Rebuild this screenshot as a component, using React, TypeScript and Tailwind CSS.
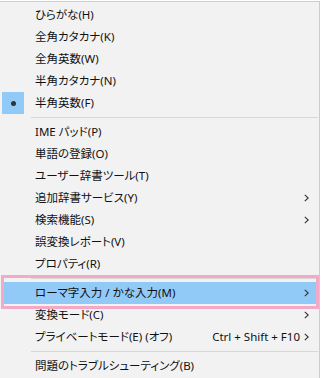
import React from 'react';

type Row =
  | { kind: 'sep' }
  | {
      kind: 'item';
      label: string;
      checked?: boolean;
      submenu?: boolean;
      shortcut?: string;
      active?: boolean;
    };

const rows: Row[] = [
  { kind: 'item', label: 'ひらがな(H)' },
  { kind: 'item', label: '全角カタカナ(K)' },
  { kind: 'item', label: '全角英数(W)' },
  { kind: 'item', label: '半角カタカナ(N)' },
  { kind: 'item', label: '半角英数(F)', checked: true },
  { kind: 'sep' },
  { kind: 'item', label: 'IME パッド(P)' },
  { kind: 'item', label: '単語の登録(O)' },
  { kind: 'item', label: 'ユーザー辞書ツール(T)' },
  { kind: 'item', label: '追加辞書サービス(Y)', submenu: true },
  { kind: 'item', label: '検索機能(S)', submenu: true },
  { kind: 'item', label: '誤変換レポート(V)' },
  { kind: 'item', label: 'プロパティ(R)' },
  { kind: 'sep' },
  { kind: 'item', label: 'ローマ字入力 / かな入力(M)', submenu: true, active: true },
  { kind: 'item', label: '変換モード(C)', submenu: true },
  { kind: 'item', label: 'プライベートモード(E) (オフ)', submenu: true, shortcut: 'Ctrl + Shift + F10' },
  { kind: 'sep' },
  { kind: 'item', label: '問題のトラブルシューティング(B)' },
];

function Chevron() {
  return (
    <svg width="5" height="8" viewBox="0 0 5 8" className="shrink-0">
      <path d="M0.8 0.8 L4.2 4 L0.8 7.2" fill="none" stroke="#333" strokeWidth="1.1" />
    </svg>
  );
}

export default function App() {
  return (
    <div className="relative w-[321px] h-[378px] overflow-hidden bg-white font-['Noto_Sans','Noto_Sans_CJK_JP',sans-serif] [font-feature-settings:'palt'] text-[11.5px] text-[#111]">
      {/* menu */}
      <div className="mt-px w-[320px] bg-[#f2f2f2] border-t border-r border-[#cccccc] pt-[2px] pb-4">
        {rows.map((row, i) =>
          row.kind === 'sep' ? (
            <div key={i} className="h-[7px] flex items-center pl-[31px] pr-[1px]">
              <div className="h-px w-full bg-[#d7d7d7]" />
            </div>
          ) : (
            <div
              key={i}
              className={`h-[22px] flex items-center ml-[2px] mr-[2px] ${row.active ? 'bg-[#91c9f7]' : ''}`}
            >
              <div
                className={`w-[22px] h-[22px] flex items-center justify-center shrink-0 ${
                  row.checked ? 'bg-[#91c9f7]' : ''
                }`}
              >
                {row.checked && <div className="w-[5px] h-[5px] rounded-full bg-[#333]" />}
              </div>
              <span className="ml-[11px] whitespace-nowrap leading-none">{row.label}</span>
              <div className="flex-1" />
              {row.shortcut && (
                <span className="mr-[4px] whitespace-nowrap leading-none">{row.shortcut}</span>
              )}
              {row.submenu && <Chevron />}
              <div className="w-[8px]" />
            </div>
          )
        )}
      </div>

      {/* annotation box */}
      <div className="absolute left-[1px] top-[275px] w-[318px] h-[34px] border-[3px] border-[#f5a9c9]" />
    </div>
  );
}
